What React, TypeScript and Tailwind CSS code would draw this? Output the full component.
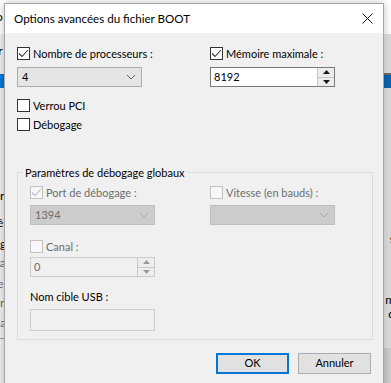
import React from 'react'

const font = { fontFamily: '"Segoe UI", Lato, "Noto Sans", sans-serif' }

function Check({ checked, disabled }: { checked?: boolean; disabled?: boolean }) {
  return (
    <span
      className={
        'w-[13px] h-[13px] shrink-0 border flex items-center justify-center ' +
        (disabled ? 'border-[#c2c2c2] bg-[#f7f7f7]' : 'border-[#333333] bg-white')
      }
    >
      {checked && (
        <svg width="11" height="11" viewBox="0 0 11 11">
          <path d="M1 5.5 L4 8.5 L10 2" fill="none" stroke={disabled ? '#bdbdbd' : '#333333'} strokeWidth="1.1" />
        </svg>
      )}
    </span>
  )
}

function CheckRow({ label, checked, disabled }: { label: string; checked?: boolean; disabled?: boolean }) {
  return (
    <label className="flex items-center gap-[3px] h-[15px] whitespace-nowrap">
      <Check checked={checked} disabled={disabled} />
      <span className={'text-[11px] leading-none ' + (disabled ? 'text-[#6d6d6d]' : 'text-black')}>{label}</span>
    </label>
  )
}

function Chevron({ color }: { color: string }) {
  return (
    <svg width="10" height="6" viewBox="0 0 10 6">
      <path d="M1 1 L5 5 L9 1" fill="none" stroke={color} strokeWidth="1" />
    </svg>
  )
}

function Select({ value, disabled }: { value?: string; disabled?: boolean }) {
  return (
    <div
      className={
        'w-[125px] h-[20px] border flex items-center justify-between pl-[4px] pr-[5px] ' +
        (disabled ? 'bg-[#cccccc] border-[#bfbfbf]' : 'bg-[#e5e5e5] border-[#adadad]')
      }
    >
      <span className={'text-[11px] ' + (disabled ? 'text-[#6d6d6d]' : 'text-black')}>{value}</span>
      <Chevron color={disabled ? '#a8a8a8' : '#606060'} />
    </div>
  )
}

function Spinner({ value, disabled }: { value: string; disabled?: boolean }) {
  const tri = disabled ? '#9a9a9a' : '#1a1a1a'
  return (
    <div
      className={
        'w-[125px] h-[20px] border flex ' +
        (disabled ? 'bg-[#f0f0f0] border-[#cccccc]' : 'bg-white border-[#7a7a7a]')
      }
    >
      <span className={'flex-1 flex items-center pl-[3px] text-[11px] ' + (disabled ? 'text-[#6d6d6d]' : 'text-black')}>
        {value}
      </span>
      <div className="w-[17px] flex flex-col border-l border-[#c8c8c8]">
        <div className="flex-1 flex items-center justify-center bg-[#ededed] border-b border-[#c8c8c8]">
          <svg width="7" height="4" viewBox="0 0 7 4">
            <path d="M0 4 L3.5 0 L7 4 Z" fill={tri} />
          </svg>
        </div>
        <div className="flex-1 flex items-center justify-center bg-[#ededed]">
          <svg width="7" height="4" viewBox="0 0 7 4">
            <path d="M0 0 L3.5 4 L7 0 Z" fill={tri} />
          </svg>
        </div>
      </div>
    </div>
  )
}

export default function App() {
  return (
    <div className="relative w-[391px] h-[383px] overflow-hidden bg-[#f0f0f0]" style={font}>
      {/* window behind the dialog */}
      <div className="absolute inset-x-0 top-0 h-[34px] bg-white" />
      <span className="absolute left-[-4px] top-[8px] text-[12px] text-black">o</span>
      <div className="absolute left-[4px] top-[34px] bottom-[45px] w-px bg-[#d5d5d5]" />
      <span className="absolute left-[-6px] top-[42px] text-[12px] text-black">rr</span>
      <div className="absolute left-0 top-[74px] w-[4px] h-[14px] bg-[#0078d7]" />
      <span className="absolute left-[-6px] top-[187px] text-[12px] text-black">ar</span>
      <span className="absolute left-[-3px] top-[214px] text-[12px] text-black">é</span>
      <span className="absolute left-[-6px] top-[235px] text-[12px] text-black">ag</span>
      <span className="absolute left-[-7px] top-[254px] text-[12px] text-[#6d6d6d]">na</span>
      <span className="absolute left-[-3px] top-[275px] text-[12px] text-[#6d6d6d]">e</span>
      <span className="absolute left-[-6px] top-[294px] text-[12px] text-[#6d6d6d]">ar</span>
      <span className="absolute left-[-6px] top-[314px] text-[12px] text-[#6d6d6d]">ea</span>
      <div className="absolute left-0 top-[338px] w-[5px] h-px bg-[#a0a0a0]" />
      <div className="absolute right-0 top-[34px] bottom-0 w-[7px] bg-gradient-to-r from-[#e6e6e6] to-[#d9d9d9]" />
      <div className="absolute right-0 top-[73px] w-[7px] h-[2px] bg-[#6a6a6a]" />
      <div className="absolute right-0 top-[75px] w-[7px] h-[13px] bg-[#0a64b4]" />
      <span className="absolute right-[-4px] top-[232px] text-[12px] leading-[14px] text-black">s</span>
      <span className="absolute right-[-10px] top-[294px] text-[12px] leading-[11px] text-black">ma</span>
      <span className="absolute right-[-4px] top-[308px] text-[12px] leading-[11px] text-black">d</span>
      <div className="absolute right-0 top-[348px] w-[7px] h-[35px] bg-[#cfcfcf]" />

      {/* dialog */}
      <div className="absolute left-[4px] top-[3px] w-[380px] h-[390px] border border-[#a6a6a6] bg-[#f0f0f0] shadow-[0_0_8px_rgba(0,0,0,0.25)] flex flex-col">
        <div className="h-[29px] bg-white flex items-center justify-between pl-[9px] pr-[9px] shrink-0">
          <span className="text-[11.6px] text-black">Options avancées du fichier BOOT</span>
          <svg width="11" height="11" viewBox="0 0 11 11" className="mr-[1px]">
            <path d="M0.5 0.5 L10.5 10.5 M10.5 0.5 L0.5 10.5" stroke="#1a1a1a" strokeWidth="1" />
          </svg>
        </div>

        <div className="flex flex-col pl-[12px] pt-[13px]">
          <div className="flex gap-[68px]">
            <div className="flex flex-col w-[125px]">
              <CheckRow label="Nombre de processeurs :" checked />
              <div className="mt-[6px]">
                <Select value="4" />
              </div>
              <div className="mt-[11px]">
                <CheckRow label="Verrou PCI" />
              </div>
              <div className="mt-[4px]">
                <CheckRow label="Débogage" />
              </div>
            </div>
            <div className="flex flex-col w-[125px]">
              <CheckRow label="Mémoire maximale :" checked />
              <div className="mt-[6px]">
                <Spinner value="8192" />
              </div>
            </div>
          </div>

          <fieldset className="mt-[33px] w-[356px] h-[175px] border border-[#dcdcdc] px-[12px]">
            <legend className="ml-[-7px] px-[2px] text-[11px] text-black leading-[15px] whitespace-nowrap">
              Paramètres de débogage globaux
            </legend>
            <div className="flex gap-[55px] mt-[5px]">
              <div className="flex flex-col w-[125px]">
                <CheckRow label="Port de débogage :" checked disabled />
                <div className="mt-[5px]">
                  <Select value="1394" disabled />
                </div>
                <div className="mt-[14px]">
                  <CheckRow label="Canal :" disabled />
                </div>
                <div className="mt-[3px]">
                  <Spinner value="0" disabled />
                </div>
                <span className="mt-[12px] text-[11px] leading-[15px] text-black whitespace-nowrap">Nom cible USB :</span>
                <div className="mt-[5px] w-[125px] h-[22px] border border-[#cccccc] bg-[#f0f0f0]" />
              </div>
              <div className="flex flex-col w-[125px]">
                <CheckRow label="Vitesse (en bauds) :" disabled />
                <div className="mt-[5px]">
                  <Select disabled />
                </div>
              </div>
            </div>
          </fieldset>

          <div className="flex justify-end gap-[9px] mt-[13px] w-[354px]">
            <button className="w-[73px] h-[21px] border-2 border-[#0078d7] bg-[#e1e1e1] text-[11px] text-black">OK</button>
            <button className="w-[73px] h-[21px] border border-[#adadad] bg-[#e1e1e1] text-[11px] text-black">Annuler</button>
          </div>
        </div>
      </div>
    </div>
  )
}
